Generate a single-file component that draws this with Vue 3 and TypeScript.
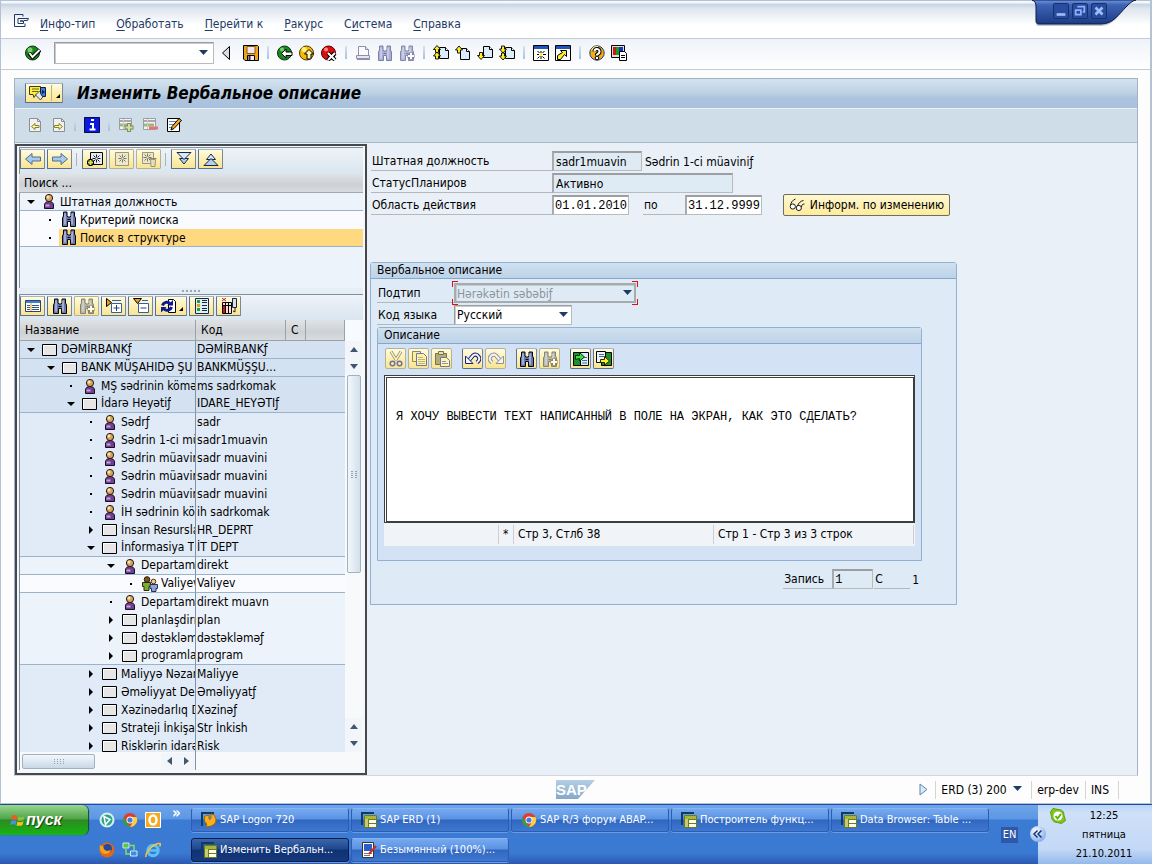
<script setup lang="ts">
import { h, ref, type FunctionalComponent } from 'vue'

const bino = (fill: string, line: string) =>
  `<path d="M1.500 15.500V7l1-2V1h3.500v4l1 1h2l1-1V1h3.500v4l1 2v8.500h-5v-5h-3v5z" fill="${fill}" stroke="${line}"/><path d="M4 2.500v11M11 2.500v11" stroke="#dfe5f5"/><path d="M6.500 8.500h3" stroke="${line}"/>`
const page = (x: number, y: number) =>
  `<path d="M${x} ${y}h6l3 3v8h-9z" fill="#dcecfb" stroke="#000"/><path d="M${x + 6} ${y}v3h3" fill="#fff" stroke="#000"/>`
const sheet = `<path d="M3.500 1.500h8l3 3v10h-11z" fill="#f1f1ee" stroke="#8a8f93"/><path d="M11.500 1.500v3h3" fill="none" stroke="#8a8f93"/>`
const up = (x: number, y: number) => `<path d="M${x} ${y}l3.500 4h-2v3h-3v-3h-2z" fill="#ffee20" stroke="#000" stroke-width=".9"/>`
const down = (x: number, y: number) => `<path d="M${x} ${y}l3.500-4h-2v-3h-3v3h-2z" fill="#ffee20" stroke="#000" stroke-width=".9"/>`
const star = (x: number, y: number, c: string) =>
  `<path d="M${x - 4} ${y}h3M${x + 1} ${y}h3M${x} ${y - 4}v3M${x} ${y + 1}v3M${x - 3} ${y - 3}l2 2M${x + 1} ${y + 1}l2 2M${x + 3} ${y - 3}l-2 2M${x - 1} ${y + 1}l-2 2" stroke="${c}" fill="none"/>`
const table = `<path d="M1.500 1.500h12v11h-12z" fill="#f4f4ea" stroke="#9a9fa0"/><path d="M2 4h11" stroke="#a9a4c4" stroke-width="2"/><path d="M2 8h10" stroke="#9fb77c" stroke-width="3"/><path d="M5.500 2v10" stroke="#c9cbc4"/>`
const curve = (d: string, line: string, fill: string) =>
  `<path d="${d}" fill="none" stroke="${line}" stroke-width="4"/><path d="${d}" fill="none" stroke="${fill}" stroke-width="2"/>`
const sapWindow = `<path d="M1 13V1h12" fill="none" stroke="#0c3c66" stroke-width="2"/><path d="M3.500 3.500h12v12h-12z" fill="#fbfbee" stroke="#6c7a1c"/><path d="M4 5.500h11" stroke="#a8b63c" stroke-width="3"/><path d="M5.500 7v8" stroke="#c3cc74" stroke-width="3"/><path d="M7.500 7v8M7 7.500h8M8 11.500h7" stroke="#6c7a1c"/>`

const art: Record<string, string> = {
  menu: `<path d="M10 3.500V1.500H1.500v12H12v-3" fill="none" stroke="#1f3a66"/><path d="M5 5.500h10.500l-1 2H11M5 5.500v5h5.500v-2.500H7M7 8h3.500" fill="none" stroke="#1f3a66"/>`,
  check: `<circle cx="7.500" cy="8" r="7" fill="#17891f" stroke="#0a300c"/><circle cx="5" cy="5" r="2.500" fill="#77d36c"/><path d="M4 8l3.500 4L15 5" fill="none" stroke="#000" stroke-width="4"/><path d="M4.500 8l3 4L14.500 5" fill="none" stroke="#fff" stroke-width="2"/>`,
  prev: `<path d="M11.500 1.500v13L4.500 8z" fill="#d9dce2" stroke="#000"/>`,
  save: `<path d="M.5.500h14l1 1v14H2l-1.500-1.500z" fill="#f0a41c" stroke="#000"/><path d="M4 1.500h8v7H4z" fill="#f2e4f2" stroke="#8a5a14"/><path d="M4.500 10.500h7v5h-7z" fill="#eee" stroke="#000"/><path d="M6.500 11v4" stroke="#333" stroke-width="2"/>`,
  back: `<circle cx="7.500" cy="8" r="7" fill="#17891f" stroke="#0a300c"/><circle cx="5" cy="4.500" r="2" fill="#77d36c"/><path d="M4.500 8.500l4.500-4.500v3h6v3.500H9v2.500z" fill="#fff" stroke="#000"/>`,
  exit: `<circle cx="7.500" cy="8" r="7" fill="#f6b90c" stroke="#4a3300"/><circle cx="5" cy="4.500" r="2.500" fill="#fff27a"/><path d="M10 4.500l4.500 4.500h-2.500v5H8V9H5.500z" fill="#fff4b0" stroke="#000"/>`,
  cancel: `<circle cx="7.500" cy="8" r="7" fill="#dc0f10" stroke="#4a0000"/><circle cx="5" cy="4.500" r="2" fill="#ff8a80"/><path d="M7 8l7 7M14 8l-7 7" stroke="#000" stroke-width="4"/><path d="M7 8l7 7M14 8l-7 7" stroke="#fff" stroke-width="2"/>`,
  print: `<path d="M3.500 10V1.500h7l3 3V10" fill="#fbfbff" stroke="#8e8fae"/><path d="M10.500 1.500v3h3M1.500 10.500h13v3h-13z" fill="#e6e6f0" stroke="#8e8fae"/><path d="M2 14.500h13" stroke="#8e8fae"/>`,
  findDim: bino('#a9aed4', '#7c7fa6'),
  findNextDim: bino('#b2b6d2', '#8688aa') + `<path d="M12 7.500v7M8.500 11h7" stroke="#7c7fa6" stroke-width="4"/><path d="M12 8v6M9 11h6" stroke="#fff" stroke-width="2"/>`,
  first: page(6.5, 2.5) + up(4, 0.5) + up(4, 7),
  pageUp: page(5.5, 3.5) + up(4, 1),
  pageDown: page(6.5, 1.5) + down(4, 14.5),
  last: page(6.5, 2.5) + down(4, 8) + down(4, 15),
  session: `<path d="M.5.500h15v15H.500z" fill="#fff" stroke="#000"/><path d="M1 2.500h14" stroke="#1d56b8" stroke-width="3"/><path d="M8 6v2M8 11v3M4 9.500h2M10 9.500h3M4.500 6l2 2M11.500 6l-2 2M4.500 13.500l2-2M11.500 13.500l-2-2" stroke="#000"/><circle cx="8" cy="9.500" r="1.500" fill="#ffee20"/>`,
  shortcut: `<path d="M.5.500h15v15H.500z" fill="#fff" stroke="#000"/><path d="M1 2.500h14" stroke="#1d56b8" stroke-width="3"/><path d="M2.500 14.500v-4l5-3-2-2h6v6l-2-2-4 5z" fill="#ffee20" stroke="#000"/>`,
  help: `<circle cx="8" cy="8" r="7.200" fill="#f7ad10" stroke="#1b3a86"/><path d="M3 5a6 6 0 0 1 6-3" stroke="#fff27a" stroke-width="2" fill="none"/><path d="M5.500 6.500a2.500 2.500 0 1 1 3.500 2.300l-1 .9v.8" fill="none" stroke="#000" stroke-width="4"/><path d="M5.500 6.500a2.500 2.500 0 1 1 3.500 2.300l-1 .9v.8" fill="none" stroke="#fff" stroke-width="2"/><circle cx="8" cy="13" r="1.800" fill="#fff" stroke="#000"/>`,
  monitor: `<path d="M.5.500h13v12H.500z" fill="#ddd" stroke="#000"/><path d="M2 2h3v8H2z" fill="#d01616"/><path d="M5 2h3v8H5z" fill="#12a01c"/><path d="M8 2h4v8H8z" fill="#1531c6"/><path d="M8.500 6.500h5l2 2v7h-7z" fill="#fff" stroke="#000"/><path d="M10 10.500h4M10 12.500h4" stroke="#000"/>`,
  service: `<path d="M.5 1.500h11v8H7l-2 3-1-3H.500z" fill="#ffee3a" stroke="#3b3a10"/><path d="M3 4h7M3 6.500h6" stroke="#6d6712"/><path d="M6.500 10l4-4 4 5-3 4z" fill="#e7e7e7" stroke="#445"/><path d="M11.500 2.500h5v9h-3l-2-3z" fill="#3d7fd0" stroke="#0b1e4c"/><path d="M13 5l3 2-3 2z" fill="#061a40"/>`,
  docPrev: sheet + `<path d="M5.500 9.500l3.500-3v2h4v2H9v2z" fill="#fff4a0" stroke="#85803a"/>`,
  docNext: sheet + `<path d="M12.500 9.500l-3.500-3v2H4.500v2H9v2z" fill="#fff4a0" stroke="#85803a"/>`,
  info: `<path d="M.5.500h15v15H.500z" fill="#0a18e0" stroke="#04094a"/><path d="M7 3h3M6 7h3v5M5.500 12.500h6" stroke="#fff" stroke-width="2" fill="none"/>`,
  rowAdd: table + `<path d="M11 6v9M6.500 10.500h9" stroke="#7e8d63" stroke-width="4"/><path d="M11 7v7M7.500 10.500h7" stroke="#cfe0a0" stroke-width="2"/>`,
  rowDel: table + `<path d="M7 11h9" stroke="#e8707a" stroke-width="3"/>`,
  edit: `<path d="M1.500 1.500h12v13h-12z" fill="#fff" stroke="#000"/><path d="M3 4.500h7M3 7.500h5M3 10.500h3" stroke="#5d87c8"/><path d="M5 13l1-3.500L13 1.500l2.500 2-7.500 8z" fill="#f6a821" stroke="#000"/>`,
  left: `<path d="M.5 8 7 2.500v3.500h8.500v4H7v3.500z" fill="#a9c9ea" stroke="#4b6f9a"/>`,
  right: `<path d="M15.500 8 9 2.500v3.500H.500v4H9v3.500z" fill="#a9c9ea" stroke="#4b6f9a"/>`,
  create: `<path d="M3.500 1.500h12v12h-12z" fill="#e4e9f4" stroke="#000"/>` + star(9.5, 7.5, '#1a1a1a') + `<path d="M3.500 8v7M0 11.500h7" stroke="#000" stroke-width="4"/><path d="M3.500 9v5M1 11.500h5" stroke="#d4e84a" stroke-width="2"/>`,
  variant: `<path d="M1.500 1.500h13v13h-13z" fill="#eee9cd" stroke="#9a967c"/>` + star(8.5, 7.5, '#77745f'),
  remove: `<path d="M1.500 1.500h11v11h-11z" fill="#eee9cd" stroke="#9a967c"/>` + star(6.500, 6.500, '#77745f') + `<path d="M9.500 8.500h5l-.5 7h-4z" fill="#e7dfb8" stroke="#9a967c"/><path d="M8.500 7.500h7" stroke="#8a866c"/>`,
  expand: `<path d="M3.500 7.500h9L8 13z" fill="#b4d0ec" stroke="#14264a"/><path d="M1 1.500h14L8 8.500z" fill="#d9e9f8" stroke="#14264a"/>`,
  collapse: `<path d="M3.500 8.500h9L8 3z" fill="#d9e9f8" stroke="#14264a"/><path d="M1 14.500h14L8 7.500z" fill="#b4d0ec" stroke="#14264a"/>`,
  list: `<path d="M.5 2.500h15v11H.500z" fill="#fff" stroke="#27466e"/><path d="M1 4h14" stroke="#3d7fd0" stroke-width="2"/><path d="M2 7.500h3M2 9.500h3M2 11.500h3M7 7.500h7M7 9.500h7M7 11.500h7" stroke="#35567f"/><path d="M6 5v8" stroke="#e0a020"/>`,
  find: bino('#6877ae', '#05070f'),
  findNext: bino('#b7b6a8', '#85826e') + `<path d="M12 7.500v7M8.500 11h7" stroke="#85826e" stroke-width="4"/><path d="M12 8v6M9 11h6" stroke="#fffbe0" stroke-width="2"/>`,
  nodeOpen: `<path d="M5.500 5.500h10v9h-10z" fill="#fff" stroke="#2f5fa8"/><path d="M10.500 7v6M7.500 10h6" stroke="#1f3f90"/><path d="M.5.500v8l5-4z" fill="#f29b1c" stroke="#000"/><path d="M6 2.500h9" stroke="#2f5fa8"/>`,
  nodeClose: `<path d="M5.500 5.500h10v9h-10z" fill="#fff" stroke="#2f5fa8"/><path d="M7.500 10h6" stroke="#1f3f90"/><path d="M.5.500h8l-4 5z" fill="#f29b1c" stroke="#000"/><path d="M9 2.500h6" stroke="#2f5fa8"/>`,
  refresh: `<path d="M8.500 1.500h5l2 2v11h-7z" fill="#fff" stroke="#000"/><path d="M2.500 7.500a4.500 4.500 0 0 1 7.500-2M11.500 9a4.500 4.500 0 0 1-7.500 2" fill="none" stroke="#0b1a8c" stroke-width="3"/><path d="M7.500 7.500h5.500V2zM6.500 9H1v5.500z" fill="#0b1a8c"/>`,
  legend: `<path d="M1.500.500h13v15h-13z" fill="#dff0f4" stroke="#14264a"/><path d="M3 3.500h3M3 11.500h3" stroke="#2a9c34" stroke-width="3"/><path d="M3 7.500h3" stroke="#e0a020" stroke-width="3"/><path d="M8 2.500h5M8 4.500h5M8 7.500h5M8 10.500h5M8 12.500h5" stroke="#14264a"/>`,
  columns: `<path d="M1 0l4 3M5 0 1 3M11 0l4 3" stroke="#d01616"/><path d="M1.500 4.500h9v11h-9z" fill="#f8dede" stroke="#000"/><path d="M1.500 7.500h9M4.500 4v11M7.500 4v11" stroke="#000"/><path d="M3 8v7" stroke="#d01616" stroke-width="2"/><path d="M11.500.500h4v9h-4z" fill="#cfe2f4" stroke="#223"/><path d="M14 10v4l-2-1" stroke="#223" fill="none"/>`,
  person: `<path d="M3.500 15.500v-3.500c0-2 1.500-3.500 4.500-3.500s4.500 1.500 4.500 3.500v3.500z" fill="#6f3f90" stroke="#1a0d26"/><path d="M4.500 12.500h4" stroke="#c6a5dc" stroke-width="2"/><circle cx="8" cy="5" r="3.600" fill="#d3a45e" stroke="#2a1608"/><circle cx="7" cy="4" r="1.500" fill="#f8e2b6"/>`,
  people: `<circle cx="5" cy="3.500" r="2.800" fill="#7a5220" stroke="#2a1608"/><path d="M.5 6.500h8v4h-1.500v4h-5v-4H.500z" fill="#7fae2c" stroke="#223008"/><circle cx="11.500" cy="5.500" r="2.300" fill="#f2cd86" stroke="#4a3010"/><path d="M8 8.500h7.500v4H14v3H9.500v-3H8z" fill="#8fa3d8" stroke="#26305a"/>`,
  folder: `<path d="M.5 2.500h14v11H.500z" fill="#e6e6e6" stroke="#000"/><path d="M1.500 12.500v-9h12" fill="none" stroke="#fff"/>`,
  glasses: `<path d="M1.500 9c0-3 2-6 5-7M8.500 9c1-3 3-5 6-5.500" fill="none" stroke="#1a1a1a"/><circle cx="3.800" cy="9.500" r="2.600" fill="#fff" stroke="#1a1a1a"/><circle cx="9.800" cy="11" r="2.600" fill="#fff" stroke="#1a1a1a"/><path d="M12.500 10c0-2 1-3 3-3" fill="none" stroke="#1a1a1a"/>`,
  cut: `<path d="M3 .5l5.500 9M13 .5l-5.500 9" stroke="#7d8094" stroke-width="3"/><path d="M3 .5l5.500 9M13 .5l-5.500 9" stroke="#fff3a8" stroke-width="1.500"/><circle cx="4.500" cy="12.500" r="2.300" fill="none" stroke="#6f729a" stroke-width="1.500"/><circle cx="11.500" cy="12.500" r="2.300" fill="none" stroke="#6f729a" stroke-width="1.500"/>`,
  copy: `<path d="M1.500.500h8v10h-8z" fill="#fbf0a0" stroke="#8c8a60"/><path d="M5.500 2.500h7l3 3v9h-10z" fill="#fff39a" stroke="#6f72b8"/><path d="M7 6.500h5M7 8.500h7M7 10.500h7M7 12.500h7" stroke="#b9b48e"/>`,
  paste: `<path d="M1.500 2.500h11v11h-11z" fill="#b4ad74" stroke="#77744c"/><path d="M4.500.500h5v3h-5z" fill="#e8e2b4" stroke="#77744c"/><path d="M6.500 6.500h6l3 3v6h-9z" fill="#fff6a4" stroke="#6f72b8"/><path d="M8 10.500h4M8 12.500h6" stroke="#8d8fcf"/>`,
  undo: curve('M3.500 10 8 4.500c2-1.500 4-1 5.500 1s1 4-1.500 6', '#14207c', '#f4f6fd') + `<path d="M.5 5v7.500H8z" fill="#f4f6fd" stroke="#14207c"/>`,
  redo: curve('M12.500 10 8 4.500c-2-1.500-4-1-5.500 1s-1 4 1.500 6', '#8e90a8', '#f8f5e4') + `<path d="M15.500 5v7.500H8z" fill="#f8f5e4" stroke="#8e90a8"/>`,
  load: `<path d="M.5 1.500h10v13H.500z" fill="#1d8f2c" stroke="#000"/><path d="M7.500 1.500h8v13h-8z" fill="#dcecfb" stroke="#000"/><path d="M9 6.500h5M9 9.500h5M9 12h5" stroke="#4a6a90"/><path d="M2.500 8.500v-4h4v-3l5 4.500-5 4v-2.500z" fill="#35e03f" stroke="#03310a"/>`,
  store: `<path d="M5.500 1.500h10v13h-10z" fill="#1d8f2c" stroke="#000"/><path d="M.5.500h9v11h-9z" fill="#eaf3fb" stroke="#000"/><path d="M3 3.500h5M3 5.500h5" stroke="#4a6a90"/><path d="M4.500 11.500v-3h4v-3l5 4.500-5 4v-2.500z" fill="#ffee20" stroke="#2a2500"/>`,
  flag: `<path d="M2 4c2-1.500 4-1 5.500 0L6.500 8C5 7 3 7 1 8z" fill="#ee5a24"/><path d="M8.500 4.500c2 1 4 1 6-.5l-1 4c-2 1-4 1-6 .5z" fill="#86c440"/><path d="M1 9c2-1 4-1 5.500 0l-1 4C4 12 2 12 0 13z" fill="#4a90e2"/><path d="M7.500 9.500c2 1 4 1 6-.5l-1 4c-2 1-4 1-6 .5z" fill="#fcc21b"/>`,
  safari: `<circle cx="8" cy="8" r="6.500" fill="#2fa58c" stroke="#d8f2ec" stroke-width="2"/><path d="M5 4.500l6 3-4.500 5z" fill="none" stroke="#fff" stroke-width="1.500"/>`,
  chrome: `<circle cx="8" cy="8" r="7" fill="#e33b2e"/><path d="M1.800 4.800 5 10.500 8.500 15A7 7 0 0 1 1.800 4.800z" fill="#2fa14b"/><path d="M8 5h6.500a7 7 0 0 1-6.500 10l3.500-6z" fill="#fbd03b"/><circle cx="8" cy="8" r="3.500" fill="#fff"/><circle cx="8" cy="8" r="2.600" fill="#3f7ee0"/>`,
  outlook: `<path d="M.5.500h15v15H.500z" fill="#f6a91c" stroke="#fff"/><ellipse cx="8" cy="8" rx="3.500" ry="4.500" fill="none" stroke="#fff" stroke-width="2.500"/>`,
  firefox: `<circle cx="8" cy="8" r="7.500" fill="#e4641a"/><circle cx="8.500" cy="6.500" r="4.500" fill="#234a9c"/><path d="M1 3c1 1 2 1 3 1 1 3 1 4 4 5l4-1c-1 4-6 5-9 3-2-2-3-5-2-8z" fill="#f9a11b"/>`,
  network: `<path d="M1 1h6v5H1z" fill="#56c83a" stroke="#cfe8ff"/><path d="M8.500 9h6.500v5H8.500z" fill="#3a8fdc" stroke="#cfe8ff"/><path d="M4 7v5h4M8 3.500h4V8" fill="none" stroke="#7fe05c" stroke-width="1.500"/>`,
  explorer: `<circle cx="8" cy="8.500" r="5.200" fill="none" stroke="#5cc0f5" stroke-width="3"/><path d="M4 8.500h9" stroke="#5cc0f5" stroke-width="2.500"/><path d="M1 15C0 10 9 1 15 1.500c1 1-.5 3-.5 3" fill="none" stroke="#fbc62e" stroke-width="1.500"/>`,
  logon: `<path d="M1 14V1h12" fill="none" stroke="#0c3c66" stroke-width="2"/><path d="M4 4l4-1v4c1 1 2 0 2-1V2l3 1 2 4c0 4-2 6-5 7l-5 1c1-2 1-3 0-4-2-2-2-4-1-7z" fill="#f9b21d" stroke="#a86408"/>`,
  sapWindow,
  paint: `<path d="M1.500.500h11v15h-11z" fill="#fff" stroke="#333"/><path d="M3 2h8v7H3z" fill="#2b5fc8"/><path d="M3 11.500h8M3 13.500h6" stroke="#777"/><path d="M8 12l7-8" stroke="#d02a1a" stroke-width="2"/>`,
  skype: `<path d="M3 .5l5 1c4 0 6 2 6 6l1.500 5-4 3-4-1c-4 0-6-3-6-6L.5 4z" fill="#7ec81e" stroke="#5a9a10"/><circle cx="8" cy="8" r="4.500" fill="#fff"/><path d="M5.500 8l2 2.500 3.500-4.500" fill="none" stroke="#5fae10" stroke-width="2"/>`,
}

const Icon: FunctionalComponent<{ name: string }> = (props) =>
  h('svg', { viewBox: props.name === 'service' ? '0 0 18 16' : '0 0 16 16', class: 'icon', 'aria-hidden': 'true', innerHTML: art[props.name] })
Icon.props = ['name']

const menus = [
  ['', 'И', 'нфо-тип'],
  ['', 'О', 'бработать'],
  ['', 'П', 'ерейти к'],
  ['', 'Р', 'акурс'],
  ['С', 'и', 'стема'],
  ['', 'С', 'правка'],
]
const systemTools = [
  ['back', 'exit', 'cancel'],
  ['print', 'findDim', 'findNextDim'],
  ['first', 'pageUp', 'pageDown', 'last'],
  ['session', 'shortcut'],
  ['help', 'monitor'],
]
const appTools = [['docPrev', 'docNext'], ['info'], ['rowAdd', 'rowDel', 'edit']]
const searchTools = [['left', 'right'], ['create', 'variant', 'remove'], ['expand', 'collapse']]
const treeTools = ['list', 'find', 'findNext', 'nodeOpen', 'nodeClose', 'refresh', 'legend', 'columns']
const editorTools = [['cut', 'copy', 'paste'], ['undo', 'redo'], ['find', 'findNext'], ['load', 'store']]
const dim = ['variant', 'remove', 'findNext', 'cut', 'copy', 'paste', 'redo']

interface Node {
  level: number
  mark: 'open' | 'closed' | 'leaf'
  icon: string
  name: string
  code: string
  line?: boolean
}
const n = (level: number, mark: Node['mark'], icon: string, name: string, code: string, line = false): Node => ({ level, mark, icon, name, code, line })
const nodes: Node[] = [
  n(0, 'open', 'folder', 'DƏMİRBANKƒ', 'DƏMİRBANKƒ', true),
  n(1, 'open', 'folder', 'BANK MÜŞAHIDƏ ŞU', 'BANKMÜŞŞU...', true),
  n(2, 'leaf', 'person', 'MŞ sədrinin kömə', 'ms sadrkomak'),
  n(2, 'open', 'folder', 'İdarə Heyətiƒ', 'IDARE_HEYƏTIƒ', true),
  n(3, 'leaf', 'person', 'Sədrƒ', 'sadr'),
  n(3, 'leaf', 'person', 'Sədrin 1-ci mü', 'sadr1muavin'),
  n(3, 'leaf', 'person', 'Sədrin müavin', 'sadr muavini'),
  n(3, 'leaf', 'person', 'Sədrin müavin', 'sadr muavini'),
  n(3, 'leaf', 'person', 'Sədrin müavin', 'sadr muavini'),
  n(3, 'leaf', 'person', 'İH sədrinin kö', 'ih sadrkomak'),
  n(3, 'closed', 'folder', 'İnsan Resursla', 'HR_DEPRT'),
  n(3, 'open', 'folder', 'İnformasiya T', 'İT DEPT', true),
  n(4, 'open', 'person', 'Departam', 'direkt', true),
  n(5, 'leaf', 'people', 'Valiyev', 'Valiyev', true),
  n(4, 'leaf', 'person', 'Departam', 'direkt muavn'),
  n(4, 'closed', 'folder', 'planlaşdirm', 'plan'),
  n(4, 'closed', 'folder', 'dəstəkləm', 'dəstəkləməƒ'),
  n(4, 'closed', 'folder', 'programla', 'program', true),
  n(3, 'closed', 'folder', 'Maliyyə Nəzarə', 'Maliyye'),
  n(3, 'closed', 'folder', 'Əməliyyat Dep', 'Əməliyyatƒ'),
  n(3, 'closed', 'folder', 'Xəzinədarlıq D', 'Xəzinəƒ'),
  n(3, 'closed', 'folder', 'Strateji İnkişa', 'Str İnkish'),
  n(3, 'closed', 'folder', 'Risklərin idarə', 'Risk'),
]

const tasks = [
  { icon: 'logon', label: 'SAP Logon 720' },
  { icon: 'sapWindow', label: 'SAP ERD (1)' },
  { icon: 'chrome', label: 'SAP R/3 форум ABAP...' },
  { icon: 'sapWindow', label: 'Построитель функц...' },
  { icon: 'sapWindow', label: 'Data Browser: Table ...' },
  { icon: 'sapWindow', label: 'Изменить Вербальн...', active: true },
  { icon: 'paint', label: 'Безымянный (100%)...' },
]

const command = ref('')
const position = ref('sadr1muavin')
const status = ref('Активно')
const dateFrom = ref('01.01.2010')
const dateTo = ref('31.12.9999')
const record = ref('1')
const note = ref('\n\nЯ ХОЧУ ВЫВЕСТИ ТЕХТ НАПИСАННЫЙ В ПОЛЕ НА ЭКРАН, КАК ЭТО СДЕЛАТЬ?')
</script>

<template>
  <div class="desktop">
    <div class="window">
      <div class="window-controls">
        <svg class="controls-shape" viewBox="0 0 104 28" aria-hidden="true">
          <defs>
            <linearGradient id="controlsFill" x1="0" y1="0" x2="0" y2="1">
              <stop offset="0" stop-color="#6f97e6" />
              <stop offset=".2" stop-color="#3f63b4" />
              <stop offset="1" stop-color="#1d3c86" />
            </linearGradient>
          </defs>
          <path d="M0 0c3 1 4 3 4 7v16c0 2 1 3 3 3h62c12 0 17-10 26-20 3-3 5-5 9-6z" fill="#8b93a5" opacity=".5" />
          <path d="M0 0c3 1 4 3 4 7v14c0 2 1 3 3 3h62c12 0 17-9 26-18 3-3 5-5 9-6z" fill="url(#controlsFill)" stroke="#0d1a40" />
        </svg>
        <div class="control-buttons">
          <button type="button" aria-label="Свернуть"><svg viewBox="0 0 16 16"><path d="M3 12h10" stroke="#9fbcff" stroke-width="3" /></svg></button>
          <button type="button" aria-label="Восстановить"><svg viewBox="0 0 16 16" fill="none" stroke="#8fb0ff" stroke-width="2"><path d="M3 7h6v5H3zM6 4V3h7v6h-2" /></svg></button>
          <button type="button" aria-label="Закрыть"><svg viewBox="0 0 16 16"><path d="M4 4l8 8M12 4l-8 8" stroke="#9fbcff" stroke-width="3" /></svg></button>
        </div>
      </div>

      <nav class="menubar">
        <Icon name="menu" />
        <a v-for="m in menus" :key="m.join('')" href="#">{{ m[0] }}<u>{{ m[1] }}</u>{{ m[2] }}</a>
      </nav>

      <div class="system-bar">
        <button type="button" class="plain" aria-label="Ввод"><Icon name="check" /></button>
        <div class="combo command">
          <input v-model="command" type="text" aria-label="Команда" />
          <svg class="caret" viewBox="0 0 9 5"><path d="M0 0h9L4.500 5z" /></svg>
        </div>
        <button type="button" class="plain" aria-label="Скрыть поле"><Icon name="prev" /></button>
        <button type="button" class="plain save" aria-label="Сохранить"><Icon name="save" /></button>
        <template v-for="(group, g) in systemTools" :key="g">
          <span class="bar-sep"></span>
          <button v-for="t in group" :key="t" type="button" class="plain" :aria-label="t"><Icon :name="t" /></button>
        </template>
      </div>

      <main class="frame">
        <header class="title-bar">
          <button type="button" class="yellow service" aria-label="Услуги">
            <Icon name="service" /><span class="split"></span><span class="corner"></span>
          </button>
          <h1>Изменить Вербальное описание</h1>
        </header>
        <div class="app-bar">
          <template v-for="(group, g) in appTools" :key="g">
            <span v-if="g" class="bar-sep"></span>
            <button v-for="t in group" :key="t" type="button" class="plain" :aria-label="t"><Icon :name="t" /></button>
          </template>
        </div>

        <div class="work">
          <aside class="navigator">
            <div class="tool-row">
              <template v-for="(group, g) in searchTools" :key="g">
                <span v-if="g" class="tool-sep"></span>
                <button v-for="t in group" :key="t" type="button" class="yellow" :class="{ dim: dim.includes(t) }" :aria-label="t"><Icon :name="t" /></button>
              </template>
            </div>
            <div class="search-head">Поиск ...</div>
            <ul class="search-list">
              <li class="l0 line"><span class="mark open"></span><Icon name="person" />Штатная должность</li>
              <li class="l1"><span class="mark leaf"></span><span class="hit"><Icon name="find" />Критерий поиска</span></li>
              <li class="l1 chosen line"><span class="mark leaf"></span><span class="hit"><Icon name="find" />Поиск в структуре</span></li>
            </ul>
            <div class="splitter"><i v-for="d in 5" :key="d"></i></div>
            <div class="tool-row second">
              <button v-for="t in treeTools" :key="t" type="button" class="yellow" :class="{ dim: dim.includes(t), wide: t === 'refresh' }" :aria-label="t">
                <Icon :name="t" /><span v-if="t === 'refresh'" class="corner"></span>
              </button>
            </div>
            <div class="tree">
              <div class="tree-view">
                <table>
                  <colgroup><col class="c-name" /><col class="c-code" /><col class="c-flag" /><col /></colgroup>
                  <thead>
                    <tr><th>Название</th><th>Код</th><th>С</th><th></th></tr>
                  </thead>
                  <tbody>
                    <tr v-for="(r, i) in nodes" :key="i" :class="['d' + r.level, { line: r.line }]">
                      <td>
                        <div class="cell">
                          <i v-for="k in r.level" :key="k" class="indent"></i>
                          <span class="mark" :class="r.mark"></span><Icon :name="r.icon" /><span class="name">{{ r.name }}</span>
                        </div>
                      </td>
                      <td colspan="3">{{ r.code }}</td>
                    </tr>
                  </tbody>
                </table>
              </div>
              <div class="vscroll">
                <span class="vhead"></span>
                <b class="arrow up"></b><b class="arrow down"></b>
                <span class="vthumb"><i v-for="d in 8" :key="d"></i></span>
                <span class="vspace"></span>
                <b class="arrow up"></b><b class="arrow down"></b>
              </div>
            </div>
            <div class="hscroll">
              <span class="hthumb"><i v-for="d in 12" :key="d"></i></span>
              <span class="hspace"></span>
              <b class="arrow prev"></b><b class="arrow next"></b>
              <span class="hrest"></span>
            </div>
          </aside>

          <section class="details">
            <div class="field-row">
              <label class="under key" for="pos">Штатная должность</label>
              <input id="pos" v-model="position" class="field locked w90" readonly />
              <span class="after">Sədrin 1-ci müaviniƒ</span>
            </div>
            <div class="field-row">
              <label class="under key" for="stat">СтатусПланиров</label>
              <input id="stat" v-model="status" class="field locked w181" readonly />
            </div>
            <div class="field-row">
              <label class="under key" for="from">Область действия</label>
              <input id="from" v-model="dateFrom" class="field mono w77" />
              <label class="under to" for="to">по</label>
              <input id="to" v-model="dateTo" class="field mono w77" />
              <button type="button" class="yellow inform"><Icon name="glasses" />Информ. по изменению</button>
            </div>

            <section class="group">
              <h2>Вербальное описание</h2>
              <div class="group-body">
                <div class="field-row">
                  <label class="under sub" for="subtype">Подтип</label>
                  <div class="combo focus w182">
                    <select id="subtype"><option>Hərəkətin səbəbiƒ</option></select>
                    <svg class="caret" viewBox="0 0 9 5"><path d="M0 0h9L4.500 5z" /></svg>
                    <span class="corners"><i></i><i></i><i></i><i></i></span>
                  </div>
                </div>
                <div class="field-row">
                  <label class="under sub" for="lang">Код языка</label>
                  <div class="combo w118">
                    <select id="lang"><option>Русский</option></select>
                    <svg class="caret" viewBox="0 0 9 5"><path d="M0 0h9L4.500 5z" /></svg>
                  </div>
                </div>

                <section class="group inner">
                  <h2>Описание</h2>
                  <div class="editor">
                    <div class="editor-tools">
                      <div v-for="(group, g) in editorTools" :key="g" class="tool-group">
                        <button v-for="t in group" :key="t" type="button" class="yellow square" :class="{ dim: dim.includes(t) }" :aria-label="t"><Icon :name="t" /></button>
                      </div>
                    </div>
                    <textarea v-model="note" aria-label="Описание" spellcheck="false"></textarea>
                    <div class="editor-status">
                      <span class="s1"></span><span class="s2">*</span><span class="s3">Стр 3, Стлб 38</span><span class="s4">Стр 1 - Стр 3 из 3 строк</span>
                    </div>
                  </div>
                </section>

                <div class="record">
                  <label class="under rec" for="rec">Запись</label>
                  <input id="rec" v-model="record" class="field locked mono w41" readonly />
                  <span class="under of">С</span>
                  <span class="total">1</span>
                </div>
              </div>
            </section>
          </section>
        </div>
      </main>

      <footer class="status-bar">
        <svg class="logo" viewBox="0 0 39 19" role="img" aria-label="SAP">
          <defs>
            <linearGradient id="logoFill" x1="0" y1="0" x2="0" y2="1">
              <stop offset="0" stop-color="#b4cfe6" /><stop offset="1" stop-color="#86a8c8" />
            </linearGradient>
          </defs>
          <path d="M0 0h39L22 19H0z" fill="url(#logoFill)" />
          <text x="0" y="15" font-family="Liberation Sans, sans-serif" font-weight="bold" font-size="15" fill="#fff">SAP</text>
        </svg>
        <div class="system-info">
          <svg class="play" viewBox="0 0 9 13"><path d="M1 1l7 5.500L1 12z" fill="#dbe8f5" stroke="#5f86b0" /></svg>
          <span>ERD (3) 200 <svg class="caret-inline" viewBox="0 0 9 5"><path d="M0 0h9L4.500 5z" /></svg></span>
          <span>erp-dev</span>
          <span class="ins">INS</span>
        </div>
      </footer>
    </div>

    <div class="taskbar">
      <button type="button" class="start"><Icon name="flag" />пуск</button>
      <div class="quick">
        <Icon v-for="q in ['safari', 'chrome', 'outlook', 'firefox', 'network', 'explorer']" :key="q" :name="q" />
      </div>
      <span class="more">»</span>
      <div class="tasks">
        <button v-for="(t, i) in tasks" :key="i" type="button" :class="{ active: t.active }"><Icon :name="t.icon" /><span>{{ t.label }}</span></button>
      </div>
      <span class="lang">EN</span>
      <div class="tray">
        <button type="button" class="tray-toggle" aria-label="Показать значки">
          <svg viewBox="0 0 16 16"><path d="M7.500 4.500 4 8l3.500 3.500M11.500 4.500 8 8l3.500 3.500" fill="none" stroke="#16357c" stroke-width="1.500" /></svg>
        </button>
        <Icon name="skype" />
        <div class="clock"><span>12:25</span><span>пятница</span><span>21.10.2011</span></div>
      </div>
    </div>
  </div>
</template>

<style>
html,
body {
  margin: 0;
  height: 100%;
}
</style>

<style scoped>
* {
  box-sizing: border-box;
}
.desktop {
  display: flex;
  flex-direction: column;
  height: 100vh;
  overflow: hidden;
  font: 12px/18px 'DejaVu Sans Condensed', 'DejaVu Sans', sans-serif;
  color: #000;
}
button,
input,
select {
  font: inherit;
  color: inherit;
}
button {
  padding: 0;
  margin: 0;
}
.icon {
  width: 16px;
  height: 16px;
  flex: none;
  display: block;
}
.window {
  position: relative;
  flex: 1;
  min-height: 0;
  display: flex;
  flex-direction: column;
  border: 1px solid #b4c2d2;
  border-width: 1px 2px 1px 1px;
  background: #fdfdfd;
}
.window-controls {
  position: absolute;
  top: -1px;
  right: 14px;
  width: 104px;
  height: 28px;
}
.controls-shape {
  width: 104px;
  height: 28px;
  display: block;
}
.control-buttons {
  position: absolute;
  top: 3px;
  left: 21px;
  display: flex;
  gap: 3px;
}
.control-buttons button {
  width: 16px;
  height: 16px;
  border: 1px solid #14306e;
  border-radius: 2px;
  background: #2a4c9c;
}
.control-buttons svg {
  display: block;
  width: 14px;
  height: 14px;
}
.menubar {
  display: flex;
  align-items: center;
  gap: 21px;
  height: 38px;
  padding: 8px 12px 0;
  border-bottom: 1px solid #c4cbd6;
  background: linear-gradient(#f4f7fb 0, #f4f7fb 2px, #c6d4e4 3px, #dfe6ef 8px, #fff 24px);
}
.menubar .icon {
  margin: -6px -10px 0 0;
}
.menubar a {
  color: #1f3a66;
  text-decoration: none;
}
.menubar u {
  text-underline-offset: 2px;
}
.system-bar {
  display: flex;
  align-items: center;
  gap: 6px;
  height: 31px;
  padding: 0 0 3px 24px;
  border-bottom: 1px solid #c4cbd6;
  background: linear-gradient(#eff3f9, #fff);
}
.plain {
  border: 0;
  background: none;
  width: 16px;
  height: 16px;
}
.save {
  margin-left: 3px;
}
.bar-sep {
  width: 2px;
  height: 13px;
  margin: 0 2px;
  background: linear-gradient(#d5e3f2, #a5c2de);
}
.combo {
  position: relative;
  height: 20px;
}
.command {
  width: 160px;
  height: 22px;
  margin: 0 -2px 0 7px;
}
.combo input,
.combo select {
  display: block;
  appearance: none;
  width: 100%;
  height: 100%;
  padding: 0 2px;
  border: 1px solid #9a9da0;
  border-bottom-color: #bbb;
  border-right-color: #bbb;
  border-radius: 0;
  outline: 0;
  background: #fff;
  box-shadow: inset 1px 1px 0 #c9ccce;
}
.caret {
  position: absolute;
  top: 50%;
  right: 4px;
  width: 9px;
  height: 5px;
  margin-top: -3px;
  fill: #1f3a66;
  pointer-events: none;
}
.command .caret {
  right: 6px;
}
.frame {
  flex: 1;
  min-height: 0;
  display: flex;
  flex-direction: column;
  margin: 8px 12px 0 13px;
  border: 1px solid #a3b2c6;
  border-bottom-color: #d4d6e2;
  background: #e9f0f7;
}
.title-bar {
  display: flex;
  align-items: center;
  gap: 14px;
  height: 30px;
  flex: none;
  padding: 0 10px 2px 10px;
  border-bottom: 1px solid #e8f1f9;
  background: linear-gradient(#d3e2ef 0, #bdd1e2 50%, #adc4de 65%, #a9c1dc);
}
h1 {
  margin: 0;
  font: italic bold 17px/20px 'DejaVu Sans Condensed', 'DejaVu Sans', sans-serif;
}
.yellow {
  display: flex;
  align-items: center;
  justify-content: center;
  width: 25px;
  height: 20px;
  border: 1px solid #5c6f86;
  border-top-color: #a9b3bd;
  border-right-color: #7e8790;
  border-radius: 1px;
  background: linear-gradient(#fffbe3, #fdf0b2 50%, #f9e494);
  flex: none;
}
.yellow.dim {
  border-color: #b5b290;
}
.service {
  width: 38px;
  justify-content: flex-start;
  padding-left: 3px;
}
.service .icon {
  width: 18px;
}
.split {
  width: 1px;
  height: 16px;
  margin-left: 4px;
  background: #bdb07a;
}
.corner {
  align-self: flex-end;
  margin: 0 0 4px 4px;
  border-left: 4px solid transparent;
  border-bottom: 4px solid #000;
}
.app-bar {
  display: flex;
  align-items: center;
  gap: 8px;
  height: 34px;
  flex: none;
  padding: 0 0 2px 11px;
  border-bottom: 1px solid #a9b8c8;
  background: #cfdde8;
}
.app-bar .bar-sep {
  margin: 0;
}
.work {
  flex: 1;
  min-height: 0;
  display: flex;
}
.navigator {
  width: 352px;
  flex: none;
  display: flex;
  flex-direction: column;
  margin-top: 1px;
  border: 2px solid #46484c;
  padding: 1px 2px;
  background: #f4f8fb;
}
.tool-row {
  display: flex;
  align-items: center;
  gap: 2px;
  height: 27px;
  flex: none;
  padding: 0 0 4px;
  background: linear-gradient(#eef3f8, #dae5ef);
  border-top: 1px solid #7d90a6;
  border-left: 1px solid #7d90a6;
}
.tool-sep {
  width: 1px;
  height: 13px;
  margin: 0 3px 0 2px;
  background: #b2b2aa;
}
.tool-row.second {
  height: 26px;
}
.tool-row .wide {
  width: 32px;
}
.wide .corner {
  margin-left: 3px;
}
.search-head,
th {
  background: linear-gradient(#dfe3e6, #cdd1d5 60%, #d9dcdf);
}
.search-head {
  height: 19px;
  padding-left: 5px;
  border-bottom: 1px solid #a3a8ae;
  flex: none;
}
.search-list {
  margin: 0;
  padding: 0;
  list-style: none;
  height: 95px;
  flex: none;
  background: #edf3fb;
  border-left: 1px solid #7d90a6;
}
.search-list li {
  display: flex;
  align-items: center;
  height: 18px;
  background: #edf3fb;
}
.search-list .l0 {
  padding-left: 3px;
}
.search-list .l1 {
  padding-left: 22px;
  background: #f9fbff;
}
.search-list .icon {
  margin: 0 3px 2px 2px;
}
.search-list .line,
tr.line td {
  border-bottom: 1px solid #9bb2c8;
}
.hit {
  display: flex;
  align-items: center;
  flex: 1;
  height: 17px;
  margin-left: 1px;
}
.chosen .hit {
  background: #ffd980;
}
.splitter {
  display: flex;
  justify-content: center;
  align-items: center;
  gap: 2px;
  height: 6px;
  flex: none;
  background: #e5edf5;
}
.splitter i {
  width: 2px;
  height: 2px;
  background: #9aa6b2;
}
.mark {
  width: 16px;
  height: 16px;
  flex: none;
  display: flex;
  align-items: center;
  justify-content: center;
}
.mark::before {
  content: '';
  width: 2px;
  height: 2px;
  background: #000;
}
.mark.open::before {
  width: 0;
  height: 0;
  background: none;
  border: 4px solid transparent;
  border-top-color: #000;
  border-bottom: 0;
}
.mark.closed::before {
  width: 0;
  height: 0;
  background: none;
  border: 4px solid transparent;
  border-left-color: #000;
  border-right: 0;
}
.tree {
  flex: 1;
  min-height: 0;
  display: flex;
  border-left: 1px solid #7d90a6;
}
.tree-view {
  flex: 1;
  min-width: 0;
  overflow: hidden;
  background: #e1ebf7;
}
table {
  width: 100%;
  table-layout: fixed;
  border-collapse: separate;
  border-spacing: 0;
}
.c-name {
  width: 176px;
}
.c-code {
  width: 90px;
}
.c-flag {
  width: 20px;
}
th {
  height: 21px;
  padding: 0 5px;
  text-align: left;
  font-weight: normal;
  border-right: 1px solid #9aa2aa;
  border-bottom: 1px solid #9aa2aa;
}
td {
  height: 18px;
  padding: 0 0 0 1px;
  overflow: hidden;
  white-space: nowrap;
  line-height: 17px;
}
td:first-child {
  padding: 0;
  border-right: 1px solid #7f93a8;
}
.cell {
  display: flex;
  align-items: center;
  height: 17px;
  padding-left: 3px;
  overflow: hidden;
}
.cell .icon {
  margin: 0 3px;
}
.name {
  min-width: 0;
  overflow: hidden;
}
.indent {
  width: 20px;
  flex: none;
}
.d0 td,
.d1 td,
.d2 td {
  background: #d3e1f0;
}
.d3 td {
  background: #e1ebf7;
}
.d4 td {
  background: #edf3fb;
}
.d5 td {
  background: #f9fbff;
}
.vscroll {
  width: 18px;
  flex: none;
  display: flex;
  flex-direction: column;
  background: #f7f9fb;
}
.vhead {
  height: 21px;
  background: #f7faff;
  flex: none;
}
.arrow {
  height: 17px;
  width: 17px;
  flex: none;
  display: flex;
  align-items: center;
  justify-content: center;
  background: #f2f5f9;
}
.arrow::before {
  content: '';
  border: 4px solid transparent;
}
.arrow.up::before {
  border-bottom: 5px solid #42566e;
  border-top: 0;
}
.arrow.down::before {
  border-top: 5px solid #42566e;
  border-bottom: 0;
}
.arrow.prev::before {
  border-right: 5px solid #42566e;
  border-left: 0;
}
.arrow.next::before {
  border-left: 5px solid #42566e;
  border-right: 0;
}
.vthumb,
.hthumb {
  display: grid;
  gap: 1px 2px;
  place-content: center;
  border: 1px solid #9fb2c4;
  border-radius: 2px;
}
.vthumb {
  height: 198px;
  width: 14px;
  margin-left: 2px;
  grid-template-columns: 2px 2px;
  background: linear-gradient(90deg, #f3f7fb, #d2dfeb);
}
.hthumb {
  width: 73px;
  height: 15px;
  grid-template-columns: repeat(4, 1px);
  background: linear-gradient(#f3f7fb, #c9d8e6);
}
.vthumb i,
.hthumb i {
  height: 1px;
  background: #8fa3b6;
}
.vspace {
  flex: 1;
}
.hscroll {
  display: flex;
  align-items: center;
  height: 18px;
  margin-bottom: 2px;
  padding-left: 2px;
  flex: none;
  background: #f7f9fb;
  border-left: 1px solid #7d90a6;
}
.hspace {
  width: 66px;
}
.hrest {
  flex: 1;
  align-self: stretch;
  border-left: 1px solid #7f93a8;
}
.details {
  flex: 1;
  min-width: 0;
  padding: 8px 0 0 4px;
}
.field-row {
  display: flex;
  height: 22px;
}
.under {
  height: 20px;
  padding: 2px 0 0 1px;
  border-bottom: 1px solid #b4b8bc;
  line-height: 17px;
}
.key {
  width: 181px;
}
.field {
  height: 20px;
  padding: 0 2px;
  border: 2px solid #b9bcbe;
  border-top-color: #9c9fa2;
  border-left-color: #a8abae;
  border-width: 2px 1px 1px 2px;
  border-radius: 0;
  outline: 0;
  background: #fff;
}
.field.locked {
  background: #dfebf4;
}
.field.mono {
  padding: 0 0 0 1px;
  font-family: 'Liberation Mono', monospace;
}
.w90 {
  width: 90px;
}
.w181 {
  width: 181px;
}
.w77 {
  width: 77px;
}
.w41 {
  width: 41px;
}
.after {
  margin-left: 3px;
  padding-top: 2px;
}
.to {
  width: 42px;
  margin-left: 14px;
}
.inform {
  width: 167px;
  height: 22px;
  margin: -1px 0 0 21px;
  gap: 5px;
  border-color: #6f6e5c;
  border-radius: 2px;
  padding: 0 2px;
  background: linear-gradient(#fff8d2, #fdeb9e);
}
.group {
  width: 587px;
  max-width: 100%;
  margin: 45px 0 0 -1px;
  border: 1px solid #8fb1d3;
  border-radius: 3px 3px 0 0;
  background: #deeaf6;
}
h2 {
  margin: 0;
  height: 16px;
  padding-left: 6px;
  font: 12px/15px 'DejaVu Sans Condensed', 'DejaVu Sans', sans-serif;
  border-bottom: 1px solid #87a6cb;
  background: linear-gradient(#d0e0ef, #bdd3e8);
}
.group-body {
  padding: 4px 6px 15px;
}
.sub {
  width: 77px;
}
.w182 {
  width: 182px;
}
.w118 {
  width: 118px;
}
.focus select {
  color: #8b949c;
  background: #dfebf4;
  border: 2px solid #a6abb0;
  padding: 0 1px;
}
.corners {
  position: absolute;
  inset: -2px;
  pointer-events: none;
}
.corners i {
  position: absolute;
  width: 6px;
  height: 6px;
  border: 0 solid #e01010;
}
.corners i:nth-child(1) {
  top: 0;
  left: 0;
  border-width: 1px 0 0 1px;
}
.corners i:nth-child(2) {
  top: 0;
  right: 0;
  border-width: 1px 1px 0 0;
}
.corners i:nth-child(3) {
  bottom: 0;
  left: 0;
  border-width: 0 0 1px 1px;
}
.corners i:nth-child(4) {
  bottom: 0;
  right: 0;
  border-width: 0 1px 1px 0;
}
.inner {
  width: 545px;
  margin: 0;
  background: #d3e2f5;
}
.editor {
  padding: 4px 6px 14px;
}
.editor-tools {
  display: flex;
  gap: 10px;
  padding-left: 1px;
}
.tool-group {
  display: flex;
  gap: 2px;
}
.square {
  width: 21px;
  height: 21px;
  border-radius: 2px;
}
textarea {
  display: block;
  width: 100%;
  height: 148px;
  margin-top: 6px;
  padding: 4px 9px;
  resize: none;
  border: 2px solid #3c3e40;
  border-style: double solid solid double;
  border-width: 3px 2px 2px 3px;
  border-radius: 0;
  outline: 0;
  background: #fff;
  font: 12px/14px 'Liberation Mono', monospace;
  color: #000;
}
.editor-status {
  display: flex;
  height: 23px;
  padding: 2px 1px 2px 0;
  background: #f0f4f9;
}
.editor-status span {
  border-right: 1px solid #d2cdd2;
}
.s1 {
  width: 115px;
}
.s2 {
  width: 15px;
  padding-left: 4px;
}
.s3 {
  width: 200px;
  padding-left: 4px;
}
.s4 {
  flex: 1;
  padding-left: 4px;
}
.record {
  display: flex;
  width: 545px;
  justify-content: flex-end;
  margin-top: 8px;
}
.rec {
  width: 49px;
}
.of {
  width: 36px;
  margin-left: 1px;
}
.total {
  padding: 2px 3px 0 2px;
}
.status-bar {
  display: grid;
  grid-template-columns: 1fr auto 1fr;
  align-items: center;
  height: 27px;
  flex: none;
}
.logo {
  grid-column: 2;
  width: 39px;
  height: 19px;
}
.system-info {
  display: flex;
  align-items: center;
  justify-content: flex-end;
  margin-right: 31px;
}
.system-info span {
  padding: 0 6px 0 5px;
  border-left: 1px solid #d5d5d5;
  white-space: nowrap;
}
.system-info .ins {
  padding-right: 9px;
  border-right: 1px solid #d5d5d5;
}
.play {
  width: 9px;
  height: 13px;
  margin-right: 7px;
}
.system-info .caret-inline {
  width: 9px;
  height: 5px;
  margin: 0 3px 3px;
  fill: #1f3a66;
}
.taskbar {
  display: flex;
  height: 60px;
  flex: none;
  border-top: 1px solid #1c4aa4;
  background: linear-gradient(#6fa5ea 0, #5c97e4 14px, #3b7bd4 15px, #3a7ad2 48px, #2a58b4);
  color: #fff;
  font-size: 11px;
}
.start {
  display: flex;
  align-items: center;
  width: 88px;
  height: 30px;
  flex: none;
  padding-left: 10px;
  border: 0;
  border-radius: 0 6px 6px 0;
  background: linear-gradient(#9ad68e 0, #4fa348 14px, #2c8a22 15px, #16b612);
  box-shadow: 1px 0 1px #1a4a1a;
  color: #fff;
  font: italic bold 16px/24px 'Liberation Sans', sans-serif;
  text-shadow: 1px 1px 1px #14420f;
}
.quick {
  display: grid;
  grid-template-columns: repeat(3, 16px);
  grid-template-rows: 30px 30px;
  align-items: center;
  gap: 0 7px;
  margin-left: 11px;
  flex: none;
}
.more {
  width: 10px;
  margin: 0 9px 0 11px;
  font: bold 15px/16px 'DejaVu Sans Condensed', sans-serif;
}
.tasks {
  display: grid;
  grid-template-columns: repeat(5, 158px);
  grid-auto-rows: 24px;
  gap: 6px 2px;
  flex: 1;
  min-width: 0;
  padding-top: 3px;
}
.tasks button {
  display: flex;
  align-items: center;
  gap: 3px;
  padding: 0 8px 0 9px;
  overflow: hidden;
  white-space: nowrap;
  border: 1px solid #2c5cb4;
  border-top-color: #86b5f2;
  border-radius: 3px;
  background: linear-gradient(#76aaf0 0, #5a92e2 10px, #3166c0 11px, #3e78cf);
  box-shadow: 0 1px 0 #6b9be4;
}
.tasks .active {
  border-color: #0a1e4c;
  background: linear-gradient(#3a66ac 0, #1f478e 10px, #0f3276 11px, #16397e);
}
.lang {
  align-self: center;
  width: 17px;
  height: 16px;
  background: #2f58a8;
  text-align: center;
  line-height: 16px;
}
.tray {
  position: relative;
  display: flex;
  width: 114px;
  margin-left: 20px;
  padding: 3px 0 0 12px;
  flex: none;
  background: linear-gradient(#b9d4f6 0, #cfe0f8 8px, #c3d9f6 44px, #94b9ec);
  color: #000;
}
.tray-toggle {
  position: absolute;
  left: -8px;
  top: 21px;
  width: 16px;
  height: 16px;
  border: 0;
  border-radius: 50%;
  background: radial-gradient(circle at 6px 5px, #fff, #8fb4ee 70%, #5582cf);
}
.tray-toggle svg {
  display: block;
}
.clock {
  display: flex;
  flex-direction: column;
  flex: 1;
  padding-right: 10px;
  text-align: center;
  line-height: 19px;
  margin-top: -2px;
}
</style>
